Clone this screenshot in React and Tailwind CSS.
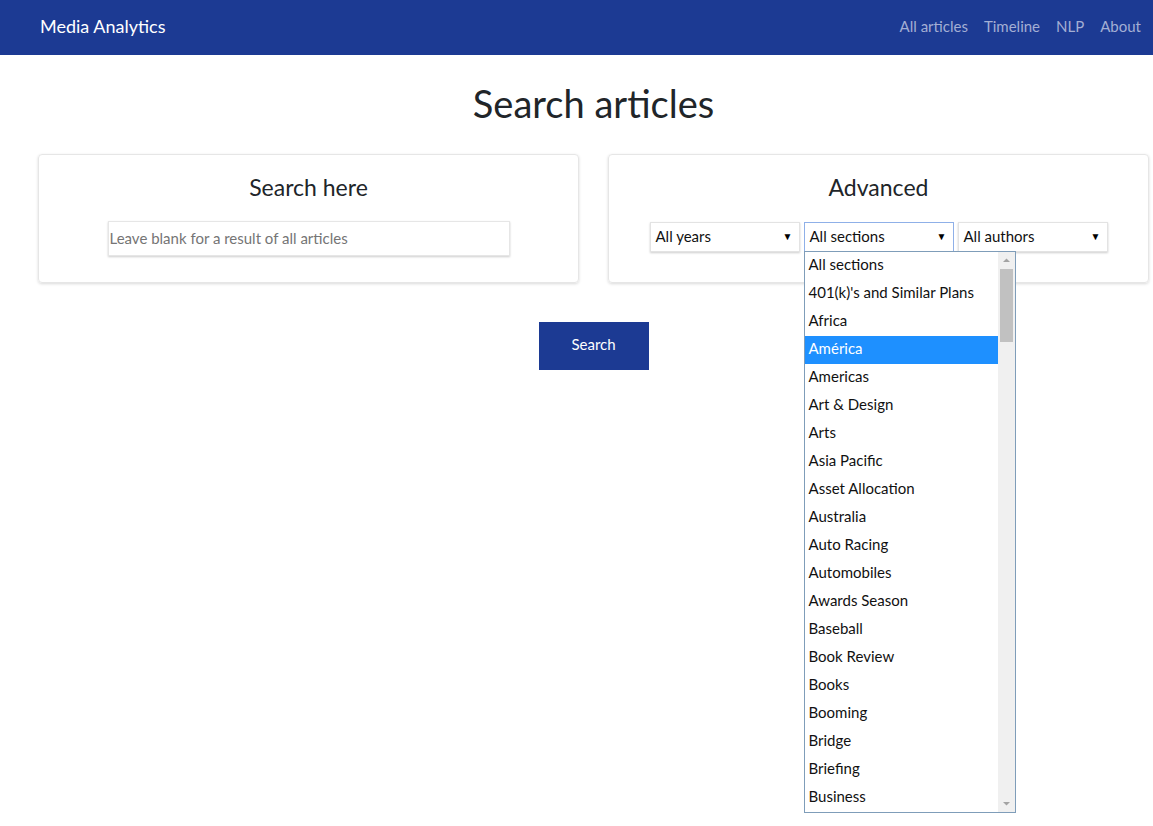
import React from "react";

const items = [
  "All sections",
  "401(k)'s and Similar Plans",
  "Africa",
  "América",
  "Americas",
  "Art & Design",
  "Arts",
  "Asia Pacific",
  "Asset Allocation",
  "Australia",
  "Auto Racing",
  "Automobiles",
  "Awards Season",
  "Baseball",
  "Book Review",
  "Books",
  "Booming",
  "Bridge",
  "Briefing",
  "Business",
];

function Select({ label, focused, children }) {
  return (
    <div
      className={`relative w-[150px] h-[30px] bg-white flex items-center justify-between pl-[5px] pr-[6px] pb-[2px] text-[15px] text-[#111] ${
        focused
          ? "border border-[#8fb0e8]"
          : "border border-[#e3e3e3] shadow-[0_1px_2px_rgba(0,0,0,0.2)]"
      }`}
    >
      <span>{label}</span>
      <span className="text-[10px] text-black">▼</span>
      {children}
    </div>
  );
}

export default function App() {
  return (
    <div
      className="min-h-[826px] bg-white text-[#212529]"
      style={{ fontFamily: "Lato, 'Noto Sans', sans-serif" }}
    >
      <nav className="h-[55px] bg-[#1c3a93] flex items-center justify-between pl-[40px] pr-[12px] pb-[3px]">
        <span className="text-white text-[18px]">Media Analytics</span>
        <div className="flex gap-[16px] text-[15px] text-[#a3aed4]">
          <span>All articles</span>
          <span>Timeline</span>
          <span>NLP</span>
          <span>About</span>
        </div>
      </nav>

      <div className="pl-[38px] pr-[4px]">
        <h1 className="text-center text-[38px] leading-none pt-[29px] pb-[32px] text-[#212529]">
          Search articles
        </h1>

        <div className="flex gap-[29px]">
          <div className="w-[541px] h-[129px] rounded-[4px] border border-[#e6e6e6] shadow-[0_1px_3px_rgba(0,0,0,0.15)] flex flex-col items-center">
            <h2 className="text-[23px] leading-none mt-[21px]">Search here</h2>
            <div className="mt-[22px] w-[402px] h-[35px] border border-[#e6e6e6] shadow-[0_1px_2px_rgba(0,0,0,0.2)] flex items-center pl-[1px] pb-[1px] text-[15px] text-[#757575]">
              Leave blank for a result of all articles
            </div>
          </div>

          <div className="w-[541px] h-[129px] rounded-[4px] border border-[#e6e6e6] shadow-[0_1px_3px_rgba(0,0,0,0.15)] flex flex-col items-center">
            <h2 className="text-[23px] leading-none mt-[21px]">Advanced</h2>
            <div className="mt-[23px] flex gap-[4px] relative">
              <Select label="All years" />
              <Select label="All sections" focused>
                <div className="absolute left-[-1px] top-[28px] w-[212px] h-[562px] bg-white border border-[#7f9db9] flex z-10">
                  <div className="flex-1 flex flex-col">
                    {items.map((it) => (
                      <div
                        key={it}
                        className={`h-[28px] flex items-center pl-[4px] pb-[3px] text-[15px] ${
                          it === "América"
                            ? "bg-[#1e90ff] text-white"
                            : "text-[#111]"
                        }`}
                      >
                        {it}
                      </div>
                    ))}
                  </div>
                  <div className="w-[17px] bg-[#f0f0f0] flex flex-col items-center">
                    <svg width="17" height="17" viewBox="0 0 17 17">
                      <path d="M5 10 L8.5 6.5 L12 10 Z" fill="#a3a3a3" />
                    </svg>
                    <div className="w-[13px] h-[73px] bg-[#c1c1c1]" />
                    <div className="flex-1" />
                    <svg width="17" height="17" viewBox="0 0 17 17">
                      <path d="M5 7 L8.5 10.5 L12 7 Z" fill="#a3a3a3" />
                    </svg>
                  </div>
                </div>
              </Select>
              <Select label="All authors" />
            </div>
          </div>
        </div>

        <div className="flex justify-center mt-[39px]">
          <button className="w-[110px] h-[48px] bg-[#1c3a93] text-white text-[15px] pb-[3px]">
            Search
          </button>
        </div>
      </div>
    </div>
  );
}
